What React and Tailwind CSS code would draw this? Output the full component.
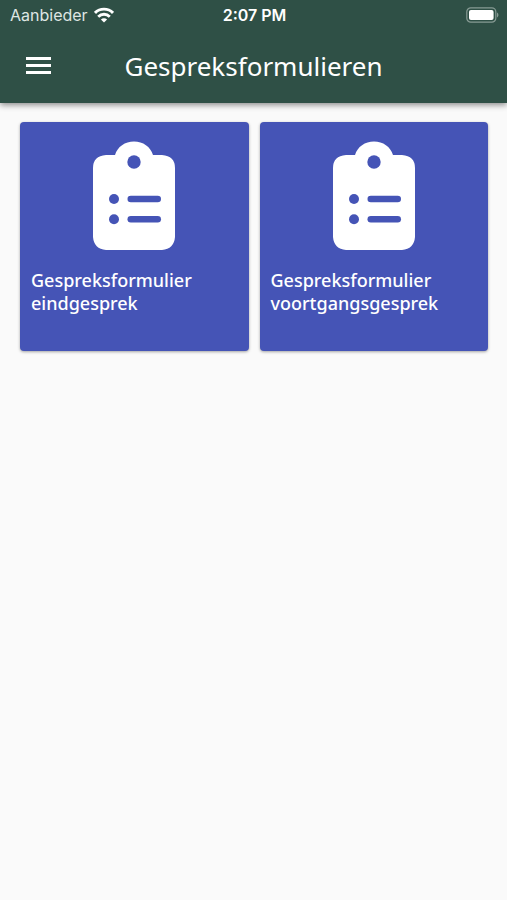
import React from "react";

const forms = [
  { id: 1, lines: ["Gespreksformulier", "eindgesprek"] },
  { id: 2, lines: ["Gespreksformulier", "voortgangsgesprek"] },
];

const WifiIcon = () => (
  <svg viewBox="0 0 20 15" className="w-5 h-4" fill="none" stroke="white" strokeWidth="2.9" aria-hidden="true">
    <path d="M1 5.4C6 .4 14 .4 19 5.4" />
    <path d="M4.2 9.2C7.6 6 12.4 6 15.8 9.2" />
    <path d="M10 15 6.9 11.9C8.7 10.3 11.3 10.3 13.1 11.9Z" fill="white" stroke="none" />
  </svg>
);

const BatteryIcon = () => (
  <svg viewBox="0 0 33 16" className="w-[33px] h-4" aria-hidden="true">
    <rect x="0.8" y="0.8" width="29" height="14.4" rx="4" fill="none" stroke="#879b94" strokeWidth="1.2" />
    <rect x="3" y="3" width="24.6" height="10" rx="2" fill="white" />
    <path d="M31 5.6c1.9.8 1.9 4 0 4.8z" fill="#879b94" />
  </svg>
);

const MenuIcon = () => (
  <svg viewBox="0 0 25 17" className="w-[25px] h-[17px]" fill="white" aria-hidden="true">
    <path d="M0 0h25v3H0zM0 7h25v3H0zM0 14h25v3H0z" />
  </svg>
);

const ClipboardIcon = () => (
  <svg viewBox="0 0 82 109" className="w-[82px] h-[109px]" aria-hidden="true">
    <path
      fill="white"
      d="M13 14H22C24.5 5.8 32 .5 41 .5S57.5 5.8 60 14H69Q82 15 82 27V96Q81 108 69 109H13Q1 108 0 96V27Q0 15 13 14Z"
    />
    <g fill="#4554b6">
      <circle cx="41" cy="21" r="6.7" />
      <circle cx="21" cy="58" r="5" />
      <circle cx="21" cy="78.3" r="5" />
      <rect x="34.5" y="54.7" width="33.5" height="6.6" rx="3.3" />
      <rect x="34.5" y="75" width="33.5" height="6.6" rx="3.3" />
    </g>
  </svg>
);

const FormCard = ({ form }) => (
  <button type="button" className="flex flex-col items-center aspect-square rounded bg-[#4554b6] px-[11px] pt-[19px] text-left text-white shadow-[0_1px_3px_rgba(0,0,0,0.35)]">
    <ClipboardIcon />
    <span className="mt-[19px] w-full text-lg leading-[23px] font-medium">
      {form.lines.map(line => <span key={line} className="block">{line}</span>)}
    </span>
  </button>
);

export default function App() {
  return (
    <div className="min-h-screen bg-[#fafafa] font-['Noto_Sans',sans-serif]">
      <header className="bg-[#2f5046] text-white shadow-[0_2px_6px_rgba(0,0,0,0.45)]">
        <div className="grid grid-cols-3 items-center h-[30px] pb-px pl-[10px] pr-2 font-['Inter',sans-serif] text-base">
          <div className="flex items-center gap-[6px] text-[#dfe6e3]">
            <span>Aanbieder</span>
            <WifiIcon />
          </div>
          <span className="text-center font-semibold">2:07 PM</span>
          <div className="flex justify-end"><BatteryIcon /></div>
        </div>
        <div className="grid grid-cols-[60px_1fr_60px] items-center h-[73px] pb-[2px]">
          <button type="button" aria-label="Menu" className="pl-[26px]"><MenuIcon /></button>
          <h1 className="text-center text-[26px] leading-8">Gespreksformulieren</h1>
        </div>
      </header>
      <main className="grid grid-cols-2 gap-[11px] pl-5 pr-[19px] pt-[19px]">
        {forms.map(form => <FormCard key={form.id} form={form} />)}
      </main>
    </div>
  );
}
